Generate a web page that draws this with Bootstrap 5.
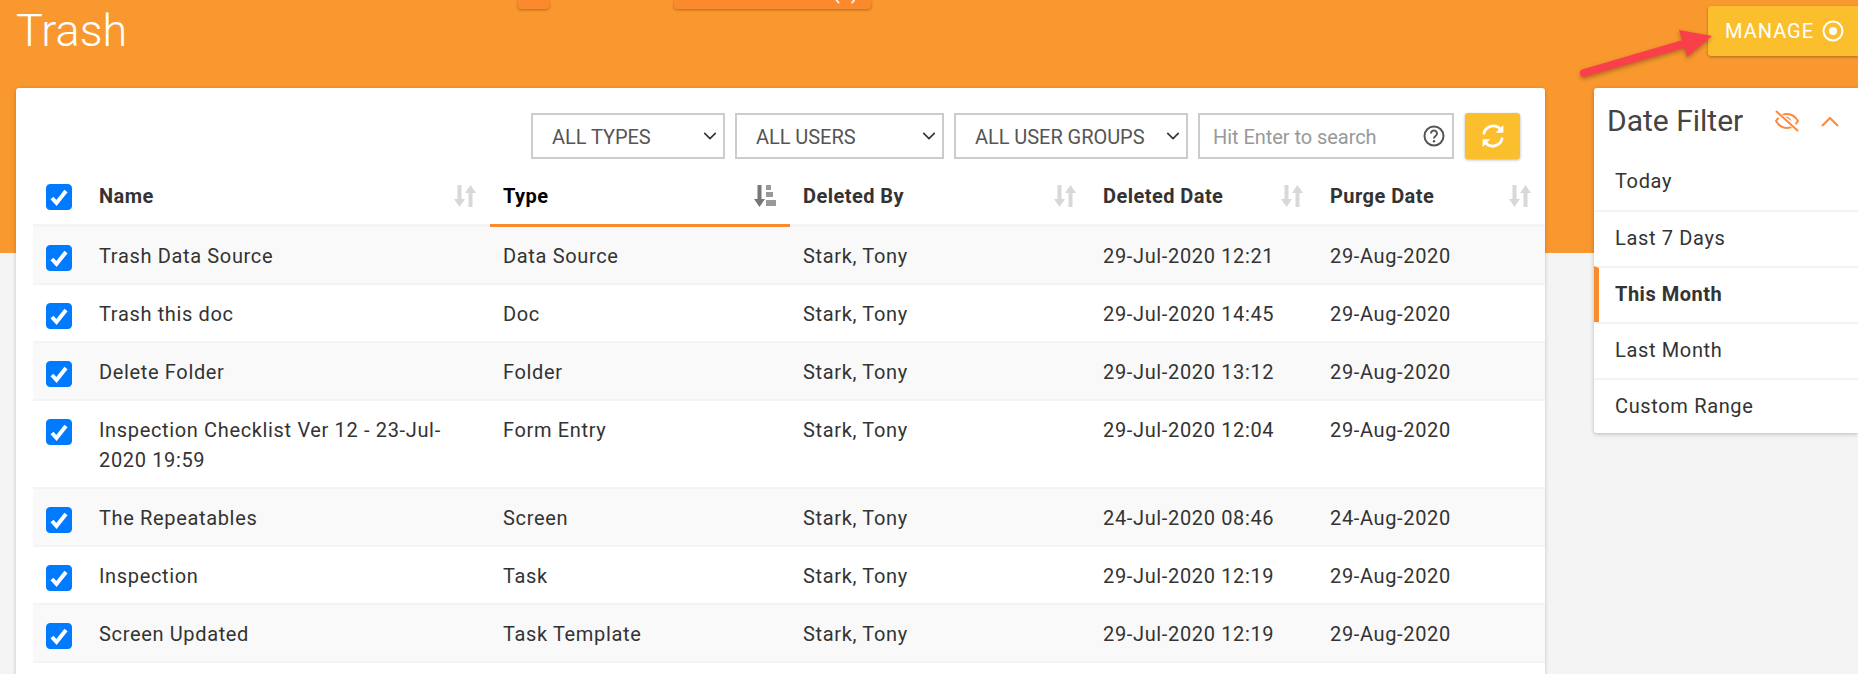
<!doctype html>
<html lang="en">
<head>
<meta charset="utf-8">
<title>Trash</title>
<link rel="stylesheet" href="https://cdn.jsdelivr.net/npm/bootstrap@5.3.0/dist/css/bootstrap.min.css">
<style>
html,body{height:100%}
body{background:#f4f4f4;font-family:Roboto,"Liberation Sans",sans-serif;color:#333;font-size:20px;letter-spacing:.65px}
.shell{height:674px}
.hero{background:#f9982e;height:253px}
.hero-row{height:60px}
.page-name{font-size:45px;font-weight:300;color:#fff;margin:0 0 0 16px;line-height:62px;letter-spacing:0;width:502px}
.strip-a{width:31px}
.strip-b{width:197px;margin-left:125px;text-align:right;padding-right:13px;color:#fff;font-size:20px;letter-spacing:0}
.strip-b span{display:block;line-height:0;margin-top:-8px}
.strip-a,.strip-b{background:#fb8a2e;height:9px;border-radius:0 0 3px 3px;box-shadow:0 1px 3px rgba(0,0,0,.3);overflow:hidden}
.manage{background:#fbbf2e;color:#fff;height:50px;margin-top:6px;width:150px;border-radius:3px 0 0 3px;padding:0 0 0 17px;font-size:20px;border:0;box-shadow:0 1px 3px rgba(0,0,0,.3);letter-spacing:1px}
.manage:hover{background:#fbbf2e;color:#fff}
.pointer{position:absolute;left:1570px;top:20px;width:150px;height:60px;pointer-events:none;filter:drop-shadow(0 2px 2px rgba(0,0,0,.3))}
.content{margin-top:-165px}
.sheet{width:1529px;margin-left:16px;background:#fff;border-radius:3px;box-shadow:0 1px 4px rgba(0,0,0,.2);padding:25px 0 0 17px;height:600px}
.tools{padding-right:25px;margin-bottom:10px;height:46px;gap:10px}
.pick{border:2px solid #ccc;border-radius:0;height:46px;color:#555;font-size:20px;padding:1px 20px 0 19px;background-position:right 4px center;background-size:18px 14px;letter-spacing:-.05px}
.w-types{width:194px;flex:none}.w-users{width:209px;flex:none}.w-groups{width:234px;flex:none}
.finder{border:2px solid #ccc;width:256px;height:46px;flex:none}
.finder input{border:0;outline:0;padding:1px 0 0 13px;height:42px;font-size:20px;color:#555;letter-spacing:-.05px;flex:1;min-width:0}
.finder input::placeholder{color:#999;opacity:1}
.finder svg{margin-right:7px;flex:none}
.again{width:55px;height:46px;background:#fbbf2e;border:0;border-radius:3px;box-shadow:0 1px 3px rgba(0,0,0,.3);padding:0;margin-left:1px;flex:none}
.again:hover{background:#fbbf2e}
.grid-t{table-layout:fixed;width:1512px;margin:0;--bs-table-striped-bg:#f9f9f9;--bs-table-striped-color:#333;--bs-table-color:#333;color:#333}
.grid-t th,.grid-t td{padding:14px 13px 12px;line-height:30px;border-bottom:2px solid #f4f4f4;font-size:20px;vertical-align:top}
.grid-t th{font-weight:700;letter-spacing:.45px;padding:12px 13px 13px;border-bottom-width:3px}
.grid-t th.box,.grid-t td.box{padding:18px 0 0 13px}
.grid-t th.box{padding-top:15px}
.grid-t th.now{color:#000;border-bottom-color:#fb8a2e}
.grid-t .form-check-input{width:26px;height:26px;margin:0;display:block;border-radius:4px;background-color:#007bff;border-color:#007bff;background-image:url("data:image/svg+xml,%3csvg xmlns='http://www.w3.org/2000/svg' viewBox='0 0 26 26'%3e%3cpath fill='none' stroke='%23fff' stroke-width='4' d='M6 14l4.500 5L20 7'/%3e%3c/svg%3e");background-size:26px 26px}
.sort-i{float:right;margin:4px 1px 0 0}
.side{width:264px;margin-left:49px;background:#fff;border-radius:3px 0 0 3px;box-shadow:0 1px 4px rgba(0,0,0,.25);height:345px}
.side-top{height:66px;padding:0 0 0 13px}
.side-top h2{font-size:30px;font-weight:400;color:#444;margin:0;letter-spacing:0;line-height:64px;width:167px}
.side-top .chev{margin-left:21px}
.side .list-group-item{border:0;border-top:2px solid #f4f4f4;height:56px;padding:0 0 0 21px;line-height:52px;color:#333;font-size:20px;background:transparent}
.side .list-group-item:first-child{border-top:0;height:56px;line-height:54px}
.side .on{font-weight:700;border-left:5px solid #fb8a2e!important;padding-left:16px;letter-spacing:.5px}
</style>
</head>
<body class="overflow-hidden">
<div class="shell overflow-hidden position-relative">
  <header class="hero">
    <div class="hero-row d-flex align-items-start">
      <h1 class="page-name">Trash</h1>
      <div class="strip-a"></div>
      <div class="strip-b"><span>(7)</span></div>
      <button type="button" class="btn manage ms-auto d-flex align-items-center gap-2">MANAGE
        <svg width="22" height="22" viewBox="0 0 22 22"><circle cx="11" cy="11" r="9.500" fill="none" stroke="#fff" stroke-width="2"/><circle cx="11" cy="11" r="4" fill="#fff"/></svg>
      </button>
    </div>
  </header>
  <svg class="pointer" viewBox="1570 20 150 60">
    <path d="M1584 73L1690 42" stroke="#f9404a" stroke-width="8" stroke-linecap="round" fill="none"/>
    <path d="M1679 30L1712 36L1687 57Z" fill="#f9404a"/>
  </svg>
  <main class="content d-flex align-items-start">
    <section class="sheet">
      <div class="tools d-flex justify-content-end">
        <select class="form-select pick w-types"><option>ALL TYPES</option></select>
        <select class="form-select pick w-users"><option>ALL USERS</option></select>
        <select class="form-select pick w-groups"><option>ALL USER GROUPS</option></select>
        <div class="finder d-flex align-items-center">
          <input type="text" placeholder="Hit Enter to search">
          <svg width="22" height="22" viewBox="0 0 22 22"><circle cx="11" cy="11" r="9.500" fill="none" stroke="#555" stroke-width="2"/><path d="M8 8.500a3 3 0 1 1 4.600 2.500c-1 .7-1.600 1.200-1.600 2.500" fill="none" stroke="#555" stroke-width="2"/><circle cx="11" cy="16.200" r="1.200" fill="#555"/></svg>
        </div>
        <button type="button" class="btn again d-flex align-items-center justify-content-center" aria-label="Refresh">
          <svg width="24" height="24" viewBox="0 0 22 22"><path d="M2.500 9.500A8.800 8.800 0 0 1 18 5M19.500 12.500A8.800 8.800 0 0 1 4 17" fill="none" stroke="#fff" stroke-width="2.500"/><path fill="#fff" d="M20.500 1v7h-7zM1.500 21v-7h7z"/></svg>
        </button>
      </div>
      <table class="table table-striped grid-t">
        <colgroup><col style="width:53px"><col style="width:404px"><col style="width:300px"><col style="width:300px"><col style="width:227px"><col style="width:228px"></colgroup>
        <thead>
          <tr>
            <th class="box"><input class="form-check-input" type="checkbox" checked aria-label="All"></th>
            <th>Name <svg class="sort-i" width="22" height="22" viewBox="0 0 22 22"><path fill="#d8d8d8" d="M3.500 0h4v14H11l-5.500 8L0 14h3.500zM14.500 22h4V8H22L16.500 0 11 8h3.500z"/></svg></th>
            <th class="now">Type <svg class="sort-i" width="22" height="22" viewBox="0 0 22 22"><path fill="#777" d="M3.500 0h4v14H11l-5.500 8L0 14h3.500z"/><path fill="#999" d="M12 0h5v5h-5zM12 7h7v5h-7zM12 15h10v6H12z"/></svg></th>
            <th>Deleted By <svg class="sort-i" width="22" height="22" viewBox="0 0 22 22"><path fill="#d8d8d8" d="M3.500 0h4v14H11l-5.500 8L0 14h3.500zM14.500 22h4V8H22L16.500 0 11 8h3.500z"/></svg></th>
            <th>Deleted Date <svg class="sort-i" width="22" height="22" viewBox="0 0 22 22"><path fill="#d8d8d8" d="M3.500 0h4v14H11l-5.500 8L0 14h3.500zM14.500 22h4V8H22L16.500 0 11 8h3.500z"/></svg></th>
            <th>Purge Date <svg class="sort-i" width="22" height="22" viewBox="0 0 22 22"><path fill="#d8d8d8" d="M3.500 0h4v14H11l-5.500 8L0 14h3.500zM14.500 22h4V8H22L16.500 0 11 8h3.500z"/></svg></th>
          </tr>
        </thead>
        <tbody>
          <tr><td class="box"><input class="form-check-input" type="checkbox" checked aria-label="Select"></td><td>Trash Data Source</td><td>Data Source</td><td>Stark, Tony</td><td>29-Jul-2020 12:21</td><td>29-Aug-2020</td></tr>
          <tr><td class="box"><input class="form-check-input" type="checkbox" checked aria-label="Select"></td><td>Trash this doc</td><td>Doc</td><td>Stark, Tony</td><td>29-Jul-2020 14:45</td><td>29-Aug-2020</td></tr>
          <tr><td class="box"><input class="form-check-input" type="checkbox" checked aria-label="Select"></td><td>Delete Folder</td><td>Folder</td><td>Stark, Tony</td><td>29-Jul-2020 13:12</td><td>29-Aug-2020</td></tr>
          <tr><td class="box"><input class="form-check-input" type="checkbox" checked aria-label="Select"></td><td>Inspection Checklist Ver 12 - 23-Jul-2020 19:59</td><td>Form Entry</td><td>Stark, Tony</td><td>29-Jul-2020 12:04</td><td>29-Aug-2020</td></tr>
          <tr><td class="box"><input class="form-check-input" type="checkbox" checked aria-label="Select"></td><td>The Repeatables</td><td>Screen</td><td>Stark, Tony</td><td>24-Jul-2020 08:46</td><td>24-Aug-2020</td></tr>
          <tr><td class="box"><input class="form-check-input" type="checkbox" checked aria-label="Select"></td><td>Inspection</td><td>Task</td><td>Stark, Tony</td><td>29-Jul-2020 12:19</td><td>29-Aug-2020</td></tr>
          <tr><td class="box"><input class="form-check-input" type="checkbox" checked aria-label="Select"></td><td>Screen Updated</td><td>Task Template</td><td>Stark, Tony</td><td>29-Jul-2020 12:19</td><td>29-Aug-2020</td></tr>
        </tbody>
      </table>
    </section>
    <aside class="side">
      <div class="side-top d-flex align-items-center">
        <h2>Date Filter</h2>
        <svg width="26" height="22" viewBox="0 0 26 22" fill="none" stroke="#fb8a3c" stroke-width="2"><path d="M2 11c3-5 7-7 11-7s8 2 11 7c-3 5-7 7-11 7s-8-2-11-7z"/><path d="M10 8a4.500 4.500 0 0 1 6 6"/><path d="M2 3l22 16" stroke="#fff" stroke-width="5"/><path d="M2 1l22 20"/></svg>
        <svg class="chev" width="18" height="11" viewBox="0 0 18 11" fill="none" stroke="#fb8a3c" stroke-width="2"><path d="M1 10l8-8 8 8"/></svg>
      </div>
      <div class="list-group list-group-flush">
        <div class="list-group-item">Today</div>
        <div class="list-group-item">Last 7 Days</div>
        <div class="list-group-item on">This Month</div>
        <div class="list-group-item">Last Month</div>
        <div class="list-group-item">Custom Range</div>
      </div>
    </aside>
  </main>
</div>
<script src="https://cdn.jsdelivr.net/npm/bootstrap@5.3.0/dist/js/bootstrap.bundle.min.js"></script>
</body>
</html>
